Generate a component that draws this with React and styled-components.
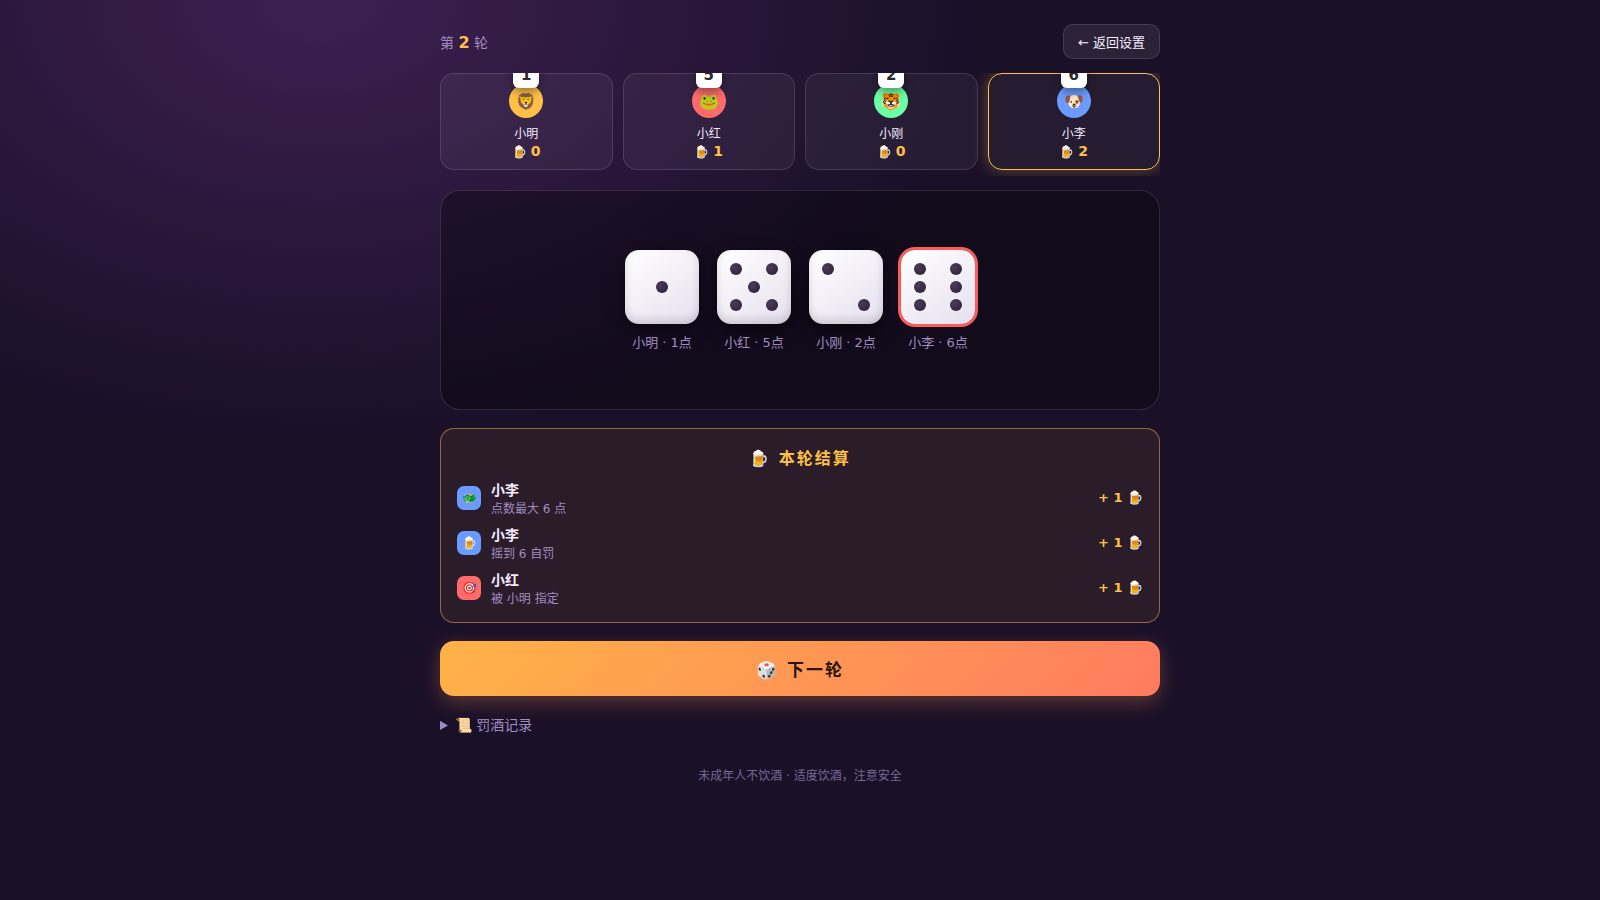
import styled, { createGlobalStyle, css } from 'styled-components';

const color = {
  bg: '#1a1028',
  text: '#f5ecff',
  muted: '#a08cc0',
  gold: '#ffc145',
  red: '#ff6b6b',
  green: '#6bffa5',
  blue: '#6b9bff',
  line: 'rgba(255, 255, 255, 0.12)',
};

const players = [
  { name: '小明', face: '🦁', color: color.gold, dice: 1, drinks: 0 },
  { name: '小红', face: '🐸', color: color.red, dice: 5, drinks: 1 },
  { name: '小刚', face: '🐯', color: color.green, dice: 2, drinks: 0 },
  { name: '小李', face: '🐶', color: color.blue, dice: 6, drinks: 2, active: true },
];

const penalties = [
  { icon: '🐲', color: color.blue, name: '小李', reason: '点数最大 6 点', count: 1 },
  { icon: '🍺', color: color.blue, name: '小李', reason: '摇到 6 自罚', count: 1 },
  { icon: '🎯', color: color.red, name: '小红', reason: '被 小明 指定', count: 1 },
];

// 3x3 格子里点的位置
const pips = {
  1: [5],
  2: [1, 9],
  3: [1, 5, 9],
  4: [1, 3, 7, 9],
  5: [1, 3, 5, 7, 9],
  6: [1, 3, 4, 6, 7, 9],
};

export default function App() {
  return (
    <>
      <GlobalStyle />
      <Page>
        <Header>
          <Round>
            第 <b>2</b> 轮
          </Round>
          <BackBtn type="button">← 返回设置</BackBtn>
        </Header>

        <Players>
          {players.map(p => (
            <Player key={p.name} $active={p.active}>
              <Badge>{p.dice}</Badge>
              <Avatar $bg={p.color}>{p.face}</Avatar>
              <PlayerName>{p.name}</PlayerName>
              <Drinks>
                🍺 <b>{p.drinks}</b>
              </Drinks>
            </Player>
          ))}
        </Players>

        <Stage>
          {players.map(p => (
            <DiceItem key={p.name}>
              <Dice $loser={p.active}>
                {pips[p.dice].map(n => (
                  <Pip key={n} $n={n} />
                ))}
              </Dice>
              <DiceLabel>
                {p.name} · {p.dice}点
              </DiceLabel>
            </DiceItem>
          ))}
        </Stage>

        <Result>
          <ResultTitle>🍺 本轮结算</ResultTitle>
          <ResultList>
            {penalties.map(r => (
              <ResultRow key={r.reason}>
                <ResultIcon $bg={r.color}>{r.icon}</ResultIcon>
                <ResultText>
                  <strong>{r.name}</strong>
                  <small>{r.reason}</small>
                </ResultText>
                <ResultCount>+ {r.count} 🍺</ResultCount>
              </ResultRow>
            ))}
          </ResultList>
        </Result>

        <NextBtn type="button">🎲 下一轮</NextBtn>

        <History>
          <summary>📜 罚酒记录</summary>
        </History>

        <Footer>未成年人不饮酒 · 适度饮酒，注意安全</Footer>
      </Page>
    </>
  );
}

const GlobalStyle = createGlobalStyle`
  * {
    box-sizing: border-box;
  }

  body {
    margin: 0;
    min-height: 100vh;
    color: ${color.text};
    font-family: 'DejaVu Sans', 'Noto Sans CJK SC', sans-serif;
    background: radial-gradient(1200px 800px at 20% 0%, #3d2052 0%, transparent 55%) no-repeat ${color.bg};
  }

  button {
    font-family: inherit;
    cursor: pointer;
  }
`;

const Page = styled.main`
  max-width: 752px;
  margin: 0 auto;
  padding: 24px 16px;
`;

const Header = styled.header`
  display: flex;
  justify-content: space-between;
  align-items: center;
  margin-bottom: 14px;
`;

const Round = styled.div`
  font-size: 14px;
  color: ${color.muted};

  b {
    font-size: 16px;
    color: ${color.gold};
  }
`;

const BackBtn = styled.button`
  padding: 7px 14px;
  border: 1px solid ${color.line};
  border-radius: 10px;
  background: rgba(255, 255, 255, 0.08);
  color: ${color.text};
  font-size: 13px;
`;

// 玩家列表
const Players = styled.section`
  display: flex;
  gap: 10px;
  padding-bottom: 6px;
  margin-bottom: 14px;
  overflow: hidden;
`;

const Player = styled.div`
  position: relative;
  flex: 1;
  display: flex;
  flex-direction: column;
  align-items: center;
  padding: 10px;
  border: 1px solid ${color.line};
  border-radius: 14px;
  background: rgba(255, 255, 255, 0.05);

  ${({ $active }) =>
    $active &&
    css`
      border-color: ${color.gold};
      box-shadow: 0 0 16px rgba(255, 193, 69, 0.35);
    `}
`;

const Badge = styled.span`
  position: absolute;
  top: -12px;
  left: 50%;
  transform: translateX(-50%);
  width: 26px;
  height: 26px;
  border-radius: 6px;
  background: #fff;
  color: #2a2a2a;
  font-size: 15px;
  font-weight: 700;
  line-height: 26px;
  text-align: center;
  box-shadow: 0 4px 10px rgba(0, 0, 0, 0.4);
`;

const Avatar = styled.div`
  display: flex;
  justify-content: center;
  align-items: center;
  width: 34px;
  height: 34px;
  margin-bottom: 6px;
  border-radius: 50%;
  background: ${({ $bg }) => $bg};
  font-size: 16px;
`;

const PlayerName = styled.div`
  font-size: 12px;
`;

const Drinks = styled.div`
  margin-top: 2px;
  font-size: 12px;
  color: ${color.gold};

  b {
    font-size: 14px;
  }
`;

// 骰子区域
const Stage = styled.section`
  display: flex;
  justify-content: center;
  align-items: center;
  gap: 18px;
  min-height: 220px;
  margin-bottom: 18px;
  border: 1px solid ${color.line};
  border-radius: 20px;
  background: rgba(0, 0, 0, 0.3);
`;

const DiceItem = styled.div`
  display: flex;
  flex-direction: column;
  align-items: center;
  gap: 8px;
`;

const Dice = styled.div`
  display: grid;
  grid-template: repeat(3, 1fr) / repeat(3, 1fr);
  place-items: center;
  width: 74px;
  height: 74px;
  padding: 10px;
  border-radius: 14px;
  background: linear-gradient(145deg, #fff, #e6e0ef);
  box-shadow: ${({ $loser }) =>
    $loser
      ? '0 0 0 3px #ff5a5a'
      : '0 6px 16px rgba(0, 0, 0, 0.5), inset 0 -4px 8px rgba(0, 0, 0, 0.15)'};
`;

const Pip = styled.span`
  grid-row: ${({ $n }) => Math.ceil($n / 3)};
  grid-column: ${({ $n }) => (($n - 1) % 3) + 1};
  width: 12px;
  height: 12px;
  border-radius: 50%;
  background: radial-gradient(circle at 35% 35%, #4a3b58, #2a1f35);
`;

const DiceLabel = styled.div`
  font-size: 13px;
  color: ${color.muted};
`;

// 本轮结算
const Result = styled.section`
  margin-bottom: 18px;
  padding: 16px;
  border: 1px solid rgba(255, 179, 71, 0.5);
  border-radius: 14px;
  background: rgba(255, 179, 71, 0.08);
`;

const ResultTitle = styled.h2`
  margin: 0 0 10px;
  font-size: 16px;
  letter-spacing: 2px;
  text-align: center;
  color: ${color.gold};
`;

const ResultList = styled.ul`
  display: grid;
  gap: 8px;
  margin: 0;
  padding: 0;
  list-style: none;
`;

const ResultRow = styled.li`
  display: flex;
  align-items: center;
  gap: 10px;
`;

const ResultIcon = styled.span`
  display: flex;
  justify-content: center;
  align-items: center;
  width: 24px;
  height: 24px;
  border-radius: 7px;
  background: ${({ $bg }) => $bg};
  font-size: 12px;
`;

const ResultText = styled.div`
  flex: 1;
  display: flex;
  flex-direction: column;

  strong {
    font-size: 14px;
  }
  small {
    font-size: 12px;
    color: ${color.muted};
  }
`;

const ResultCount = styled.span`
  font-size: 13px;
  font-weight: 700;
  color: ${color.gold};
`;

const NextBtn = styled.button`
  display: block;
  width: 100%;
  padding: 15px;
  border: none;
  border-radius: 14px;
  background: linear-gradient(135deg, #ffb347, #ff7b60);
  box-shadow: 0 6px 20px rgba(255, 150, 80, 0.3);
  color: #2a1505;
  font-size: 17px;
  font-weight: 700;
  letter-spacing: 2px;
`;

const History = styled.details`
  margin-top: 18px;
  font-size: 14px;
  color: ${color.muted};

  summary {
    cursor: pointer;
  }
`;

const Footer = styled.footer`
  margin-top: 32px;
  font-size: 12px;
  text-align: center;
  color: ${color.muted};
  opacity: 0.7;
`;
